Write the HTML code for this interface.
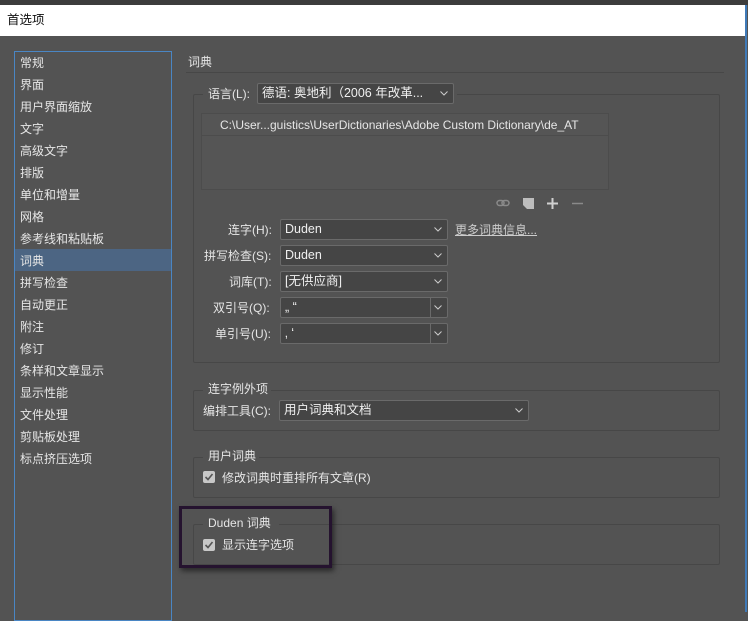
<!DOCTYPE html>
<html><head><meta charset="utf-8"><style>
*{margin:0;padding:0;box-sizing:border-box}
body{width:748px;height:612px;background:#535353;position:relative;overflow:hidden;font-family:"Liberation Sans","Noto Sans CJK SC",sans-serif;font-size:12px;color:#e6e6e6}
.a{position:absolute}
.t{position:absolute;white-space:nowrap;line-height:14px}
.grp{position:absolute;border:1px solid #474747;border-radius:2px}
.dd{position:absolute;background:#454545;border:1px solid #6a6a6a;border-radius:2px;height:21px;padding-left:4px;line-height:19px;color:#f0f0f0;font-size:12.5px}
.dd svg{position:absolute;right:5px;top:7px}
.dd .sep{position:absolute;right:16px;top:0;bottom:0;border-left:1px solid #6a6a6a}
.cb{position:absolute;width:12px;height:12px;background:#c8c8c8;border-radius:2px}
.li{position:absolute;left:5px;line-height:14px}
</style></head><body>
<div class="a" style="left:0;top:0;width:748px;height:5px;background:#3c3c3c"></div>
<div class="a" style="left:0;top:5px;width:746px;height:31px;background:#fff"></div>
<div class="t" style="left:7px;top:13px;color:#111;font-size:12.5px">首选项</div>
<div class="a" style="left:745px;top:5px;width:2px;height:607px;background:#3f7ab8"></div>

<div class="a" style="left:14px;top:51px;width:158px;height:570px;border:1px solid #4a86c4;">
 <div class="a" style="left:0;top:197px;width:156px;height:22px;background:#4c6583"></div>
 <div class="li" style="top:4px">常规</div>
 <div class="li" style="top:26px">界面</div>
 <div class="li" style="top:48px">用户界面缩放</div>
 <div class="li" style="top:70px">文字</div>
 <div class="li" style="top:92px">高级文字</div>
 <div class="li" style="top:114px">排版</div>
 <div class="li" style="top:136px">单位和增量</div>
 <div class="li" style="top:158px">网格</div>
 <div class="li" style="top:180px">参考线和粘贴板</div>
 <div class="li" style="top:202px">词典</div>
 <div class="li" style="top:224px">拼写检查</div>
 <div class="li" style="top:246px">自动更正</div>
 <div class="li" style="top:268px">附注</div>
 <div class="li" style="top:290px">修订</div>
 <div class="li" style="top:312px">条样和文章显示</div>
 <div class="li" style="top:334px">显示性能</div>
 <div class="li" style="top:356px">文件处理</div>
 <div class="li" style="top:378px">剪贴板处理</div>
 <div class="li" style="top:400px">标点挤压选项</div>
</div>

<div class="t" style="left:188px;top:55px">词典</div>
<div class="a" style="left:186px;top:72px;width:538px;height:1px;background:#474747"></div>

<div class="grp" style="left:193px;top:94px;width:527px;height:269px"></div>
<div class="a" style="left:203px;top:86px;width:254px;height:16px;background:#535353"></div>
<div class="t" style="left:208px;top:87px">语言(L):</div>
<div class="dd" style="left:257px;top:83px;width:197px">德语: 奥地利（2006 年改革...<svg width="8" height="5"><path d="M0.5 0.5L4 4L7.5 0.5" stroke="#ccc" fill="none"/></svg></div>
<div class="a" style="left:201px;top:113px;width:408px;height:77px;border:1px solid #4c4c4c;background:#555"></div>
<div class="a" style="left:201px;top:135px;width:408px;height:1px;background:#4c4c4c"></div>
<div class="t" style="left:220px;top:118px;font-size:12px">C:\User...guistics\UserDictionaries\Adobe Custom Dictionary\de_AT</div>
<svg class="a" style="left:496px;top:199px" width="14" height="8"><rect x="1" y="1.5" width="7" height="5" rx="2.5" stroke="#8a8a8a" fill="none" stroke-width="1.5"/><rect x="6" y="1.5" width="7" height="5" rx="2.5" stroke="#8a8a8a" fill="none" stroke-width="1.5"/></svg>
<svg class="a" style="left:523px;top:198px" width="11" height="11"><path d="M0 0H11V11H4L0 7Z" fill="#bdbdbd"/></svg>
<svg class="a" style="left:547px;top:198px" width="11" height="11"><path d="M5.5 0V11M0 5.5H11" stroke="#d0d0d0" stroke-width="2"/></svg>
<svg class="a" style="left:572px;top:198px" width="11" height="11"><path d="M0 5.5H11" stroke="#8a8a8a" stroke-width="1.5"/></svg>

<div class="t" style="left:228px;top:223px">连字(H):</div>
<div class="dd" style="left:280px;top:219px;width:168px">Duden<svg width="8" height="5"><path d="M0.5 0.5L4 4L7.5 0.5" stroke="#ccc" fill="none"/></svg></div>
<div class="t" style="left:455px;top:223px;color:#ccc;text-decoration:underline">更多词典信息...</div>
<div class="t" style="left:204px;top:249px">拼写检查(S):</div>
<div class="dd" style="left:280px;top:245px;width:168px">Duden<svg width="8" height="5"><path d="M0.5 0.5L4 4L7.5 0.5" stroke="#ccc" fill="none"/></svg></div>
<div class="t" style="left:229px;top:275px">词库(T):</div>
<div class="dd" style="left:280px;top:271px;width:168px">[无供应商]<svg width="8" height="5"><path d="M0.5 0.5L4 4L7.5 0.5" stroke="#ccc" fill="none"/></svg></div>
<div class="t" style="left:213px;top:301px">双引号(Q):</div>
<div class="dd" style="left:280px;top:297px;width:168px">„ “<span class="sep"></span><svg width="8" height="5"><path d="M0.5 0.5L4 4L7.5 0.5" stroke="#ccc" fill="none"/></svg></div>
<div class="t" style="left:215px;top:327px">单引号(U):</div>
<div class="dd" style="left:280px;top:323px;width:168px">‚ ‘<span class="sep"></span><svg width="8" height="5"><path d="M0.5 0.5L4 4L7.5 0.5" stroke="#ccc" fill="none"/></svg></div>

<div class="grp" style="left:193px;top:390px;width:527px;height:41px"></div>
<div class="a" style="left:203px;top:383px;width:68px;height:12px;background:#535353"></div>
<div class="t" style="left:208px;top:382px">连字例外项</div>
<div class="t" style="left:203px;top:404px">编排工具(C):</div>
<div class="dd" style="left:279px;top:400px;width:250px">用户词典和文档<svg width="8" height="5"><path d="M0.5 0.5L4 4L7.5 0.5" stroke="#ccc" fill="none"/></svg></div>

<div class="grp" style="left:193px;top:457px;width:527px;height:41px"></div>
<div class="a" style="left:203px;top:449px;width:56px;height:12px;background:#535353"></div>
<div class="t" style="left:208px;top:449px">用户词典</div>
<div class="cb" style="left:203px;top:471px"><svg width="12" height="12"><path d="M2.5 6L5 8.5L9.5 3" stroke="#555" stroke-width="1.6" fill="none"/></svg></div>
<div class="t" style="left:222px;top:471px">修改词典时重排所有文章(R)</div>

<div class="grp" style="left:193px;top:524px;width:527px;height:41px"></div>
<div class="a" style="left:203px;top:516px;width:76px;height:12px;background:#535353"></div>
<div class="t" style="left:208px;top:516px">Duden 词典</div>
<div class="cb" style="left:203px;top:539px"><svg width="12" height="12"><path d="M2.5 6L5 8.5L9.5 3" stroke="#555" stroke-width="1.6" fill="none"/></svg></div>
<div class="t" style="left:222px;top:538px">显示连字选项</div>
<div class="a" style="left:179px;top:506px;width:153px;height:62px;border:3px solid #25132f;box-shadow:2px 3px 5px rgba(0,0,0,.5)"></div>
</body></html>
